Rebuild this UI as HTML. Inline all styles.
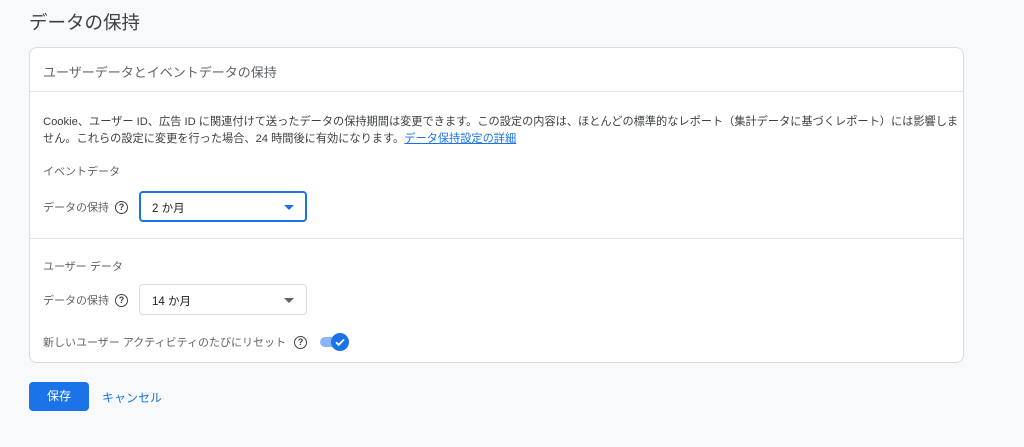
<!DOCTYPE html>
<html><head><meta charset="utf-8"><style>
*{box-sizing:border-box;margin:0;padding:0}
body{width:1024px;height:447px;background:#f8f9fa;font-family:"Liberation Sans","Noto Sans CJK JP",sans-serif;color:#3c4043;position:relative;overflow:hidden}
.abs{position:absolute;white-space:nowrap}
.title{left:29px;top:9px;font-size:18.5px;color:#3c4043}
.card{position:absolute;left:29px;top:47px;width:935px;height:316px;background:#fff;border:1px solid #dadce0;border-radius:8px}
.hdr{position:absolute;left:0;top:0;right:0;height:44px;border-bottom:1px solid #e3e5e8;font-size:13px;color:#5f6368;padding:14px 0 0 13px}
.t12{font-size:11px;color:#5f6368;display:flex;align-items:center;height:16px}
.desc{left:13px;top:66px;font-size:11.2px;line-height:17px;color:#3c4043}
.desc a{color:#1a73e8;text-decoration:underline}
.q{display:inline-block;width:13px;height:13px;border:1.5px solid #3c4043;border-radius:50%;font-size:9px;line-height:10px;text-align:center;font-weight:bold;margin-left:6px;color:#3c4043}
.sel{position:absolute;width:168px;height:31px;border:1px solid #dadce0;border-radius:4px;font-size:11.5px;color:#202124;padding:8px 0 0 12px}
.sel.f{border:2px solid #1a73e8;padding:7px 0 0 11px}
.arr{position:absolute;right:12px;top:13px;width:0;height:0;border-left:5px solid transparent;border-right:5px solid transparent;border-top:5px solid #5f6368}
.f .arr{border-top-color:#1a73e8;right:11px;top:12px}
.div{position:absolute;left:0;right:0;top:190px;border-top:1px solid #e3e5e8}
</style></head><body>
<div class="abs title">データの保持</div>
<div class="card">
<div class="hdr">ユーザーデータとイベントデータの保持</div>
<div class="abs desc">Cookie、ユーザー ID、広告 ID に関連付けて送ったデータの保持期間は変更できます。この設定の内容は、ほとんどの標準的なレポート（集計データに基づくレポート）には影響しま<br>せん。これらの設定に変更を行った場合、24 時間後に有効になります。<a>データ保持設定の詳細</a></div>
<div class="abs t12" style="left:13px;top:115px">イベントデータ</div>
<div class="abs t12" style="left:13px;top:151px">データの保持<span class="q">?</span></div>
<div class="sel f" style="left:109px;top:143px">2 か月<span class="arr"></span></div>
<div class="div"></div>
<div class="abs t12" style="left:13px;top:210px">ユーザー データ</div>
<div class="abs t12" style="left:13px;top:244px">データの保持<span class="q">?</span></div>
<div class="sel" style="left:109px;top:236px">14 か月<span class="arr"></span></div>
<div class="abs t12" style="left:13px;top:286px">新しいユーザー アクティビティのたびにリセット<span class="q" style="margin-left:8px">?</span></div>
<div style="position:absolute;left:290px;top:289px;width:22px;height:10px;border-radius:5px;background:#8ab4f8"></div>
<div style="position:absolute;left:301px;top:285px;width:18px;height:18px;border-radius:50%;background:#1a73e8"><svg width="18" height="18" viewBox="0 0 18 18"><path d="M5 9.3l2.7 2.6L13 6.5" fill="none" stroke="#fff" stroke-width="1.8"/></svg></div>
</div>
<div style="position:absolute;left:29px;top:382px;width:60px;height:29px;background:#1a73e8;border-radius:4px;color:#fff;font-size:12px;text-align:center;line-height:29px">保存</div>
<div class="abs" style="left:102px;top:389px;font-size:12px;color:#1a73e8">キャンセル</div>
</body></html>
